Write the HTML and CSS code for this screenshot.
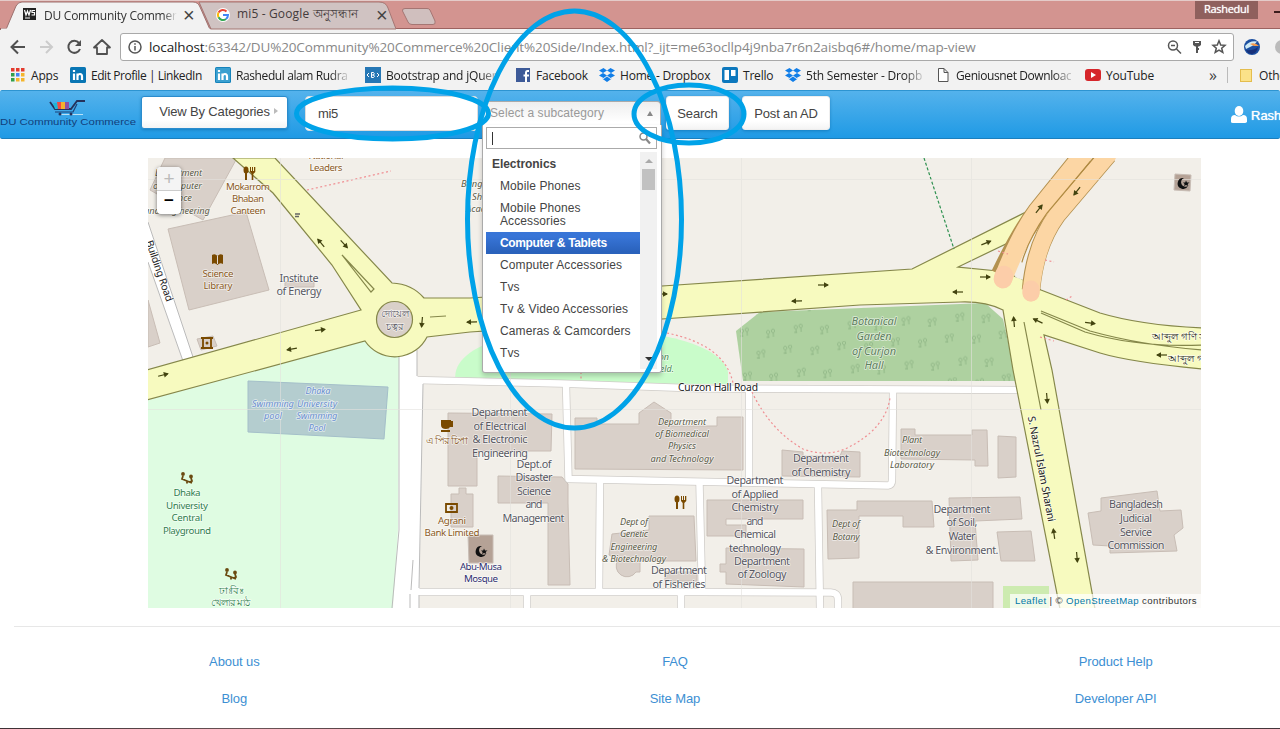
FILE: index.html
```
<!DOCTYPE html>
<html lang="en">
<head>
<meta charset="utf-8">
<title>DU Community Commerce</title>
<link rel="stylesheet" href="styles.css">
</head>
<body>
<div class="screen">
<header class="browser">
  <div class="tabs">
    <svg class="tab-shapes" width="460" height="29" viewBox="0 0 460 29">
      <path d="M199 1H379Q386 1 388 7L396 28H211Z" fill="#d0c3c2" stroke="#a57673"/>
      <path d="M0 28.500H6L16 5Q18 1 22 1H193Q198 1 200 6L210 28.500V30H0Z" fill="#f2f2f2"/>
      <path d="M0 28.500H6L16 5Q18 1 22 1H193Q198 1 200 6L210 28.500" fill="none" stroke="#9c706e"/>
      <path d="M1 28.500H210" stroke="#f2f2f2" stroke-width="2"/>
      <path d="M405 7.500H427Q429 7.500 430 9L435 20Q436 23.500 433 23.500H412Q409 23.500 408 21L402.500 10Q402 7.500 405 7.500Z" fill="#d0bfbe" stroke="#a57673"/>
    </svg>
    <div class="tab tab-active">
      <svg width="15" height="13" viewBox="0 0 15 13"><path d="M1 0H14V12H1Z" fill="#222"/><path d="M2.500 2L4 7L5.500 3L7 7L8.500 2M13 2.500H10V4.500H12.500V7H9.500M3 10H8" stroke="#fff" stroke-width="1.200" fill="none"/></svg>
      <span class="t1">DU Community Commer</span><b class="x">×</b>
    </div>
    <div class="tab">
      <svg width="14" height="14" viewBox="0 0 14 14"><circle cx="7" cy="7" r="7" fill="#fff"/><g fill="none" stroke-width="2"><path d="M2.500 4.500A5 5 0 0 1 10.500 3.500" stroke="#ea4335"/><path d="M2.500 9.300A5 5 0 0 1 2.500 4.500" stroke="#fbbc05"/><path d="M2.500 9.300A5 5 0 0 0 10 11" stroke="#34a853"/><path d="M7 7H12A5 5 0 0 1 10 11" stroke="#4285f4"/></g></svg>
      <span class="t2">mi5 - Google অনুসন্ধান</span><b class="x">×</b>
    </div>
    <span class="user">Rashedul</span><i class="min"></i>
  </div>
  <div class="toolbar">
    <svg class="navicons" width="120" height="36" viewBox="0 0 120 36" fill="none" stroke="#505050" stroke-width="2">
      <path d="M25 18H12M18 11.500L11.500 18L18 24.500"/>
      <path d="M40 18H52M46 12L52 18L46 24" stroke="#ccc"/>
      <path d="M79 14A6 6 0 1 0 80 20"/><path d="M81 11V17H75Z" fill="#505050" stroke="none"/>
      <path d="M94 18.500L102 11L110 18.500H107V25H97V18.500Z" stroke-width="1.800" stroke-linejoin="round"/>
    </svg>
    <div class="address">
      <svg width="14" height="14" viewBox="0 0 14 14" fill="none" stroke="#555" stroke-width="1.500"><circle cx="7" cy="7" r="6"/><path d="M7 6V10.500M7 3.200V4.800"/></svg>
      <span class="url"><em>localhost</em>:63342/DU%20Community%20Commerce%20Client%20Side/Index.html?_ijt=me63ocllp4j9nba7r6n2aisbq6#/home/map-view</span>
      <svg class="addr-icons" width="60" height="16" viewBox="0 0 60 16" fill="none" stroke="#555" stroke-width="1.500"><circle cx="6" cy="6.500" r="4.500"/><path d="M9.500 10L14 14.500M4 6.500H8"/><path d="M26 2H34V6L32 7.500H28L26 6Z" fill="#555" stroke="none"/><path d="M30 7V14M30 10H32" stroke-width="2"/><path d="M28 3.500H32" stroke="#fff" stroke-width="1"/><path d="M52 1.800L53.700 6L58 6.300L54.700 9.200L55.800 13.500L52 11.200L48.200 13.500L49.300 9.200L46 6.300L50.300 6Z"/></svg>
    </div>
    <svg class="ext" width="16" height="16" viewBox="0 0 16 16"><circle cx="8" cy="8" r="8" fill="#1c4fa0"/><path d="M1 7Q6 1 13 2.500L10 6Q6 8 2 10Z" fill="#cfeaf5"/><path d="M6 5Q11 3 15 7L10 7Z" fill="#f2984c"/><path d="M2 11Q9 12 14 8Q13 14 8 15Q4 15 2 11Z" fill="#16307a"/></svg>
    <i class="ext2"></i>
  </div>
  <nav class="bookmarks">
    <a><svg width="14" height="14" viewBox="0 0 14 14"><g fill="#e33b2e"><path d="M0 0h3.500v3.500H0zM5 0h3.500v3.500H5zM10 0h3.500v3.500H10z"/></g><path d="M0 5h3.500v3.500H0zM0 10h3.500v3.500H0z" fill="#31a04c"/><path d="M5 5h3.500v3.500H5z" fill="#4285f4"/><path d="M10 5h3.500v3.500H10zM5 10h3.500v3.500H5zM10 10h3.500v3.500H10z" fill="#f4b52c"/></svg><span class="b0">Apps</span></a>
    <a><svg width="16" height="16" viewBox="0 0 16 16"><rect width="16" height="16" rx="1.500" fill="#0976b4"/><path d="M4 6.500V13M4 3V5M7.500 13V6.500M7.500 9Q8 7 10 7T12 9.500V13" stroke="#fff" stroke-width="2.200" fill="none"/></svg><span class="b1">Edit Profile | LinkedIn</span></a>
    <a><svg width="16" height="16" viewBox="0 0 16 16"><rect width="16" height="16" rx="1.500" fill="#1583bb"/><rect x="1" y="1" width="14" height="14" fill="#3ba0d0"/><path d="M4 6.500V13M4 3V5M7.500 13V6.500M7.500 9Q8 7 10 7T12 9.500V13" stroke="#fff" stroke-width="2.200" fill="none"/></svg><span class="b2">Rashedul alam Rudra</span></a>
    <a><svg width="16" height="16" viewBox="0 0 16 16"><rect width="16" height="16" fill="#2577b5"/><path d="M4 6L2 8L4 10M12 6L14 8L12 10M6.500 5.500H8.500Q10 6.700 8.500 8Q10.500 9.300 8.500 10.500H6.500ZM7 8H9" stroke="#fff" fill="none"/></svg><span class="b3">Bootstrap and jQuer</span></a>
    <a><svg width="15" height="14" viewBox="0 0 15 14"><rect width="14" height="14" fill="#3d5a98"/><path d="M13 3H11.500Q10 3 10 5V14M7.500 7.500H13" stroke="#fff" stroke-width="2" fill="none"/></svg><span class="b4">Facebook</span></a>
    <a><svg width="16" height="16" viewBox="0 0 16 16" fill="#117ee8"><path id="db" d="M4.500 1L8 3.500L4 6L0 3.500ZM11.500 1L16 3.500L12 6L8 3.500ZM4 6L8 8.500L4.500 11L0 8.500ZM12 6L16 8.500L11.500 11L8 8.500ZM8 9.500L11.500 12L13 11.500L8 15L3 11.500L4.500 12Z"/></svg><span class="b5">Home - Dropbox</span></a>
    <a><svg width="16" height="16" viewBox="0 0 16 16"><rect width="16" height="16" rx="2" fill="#0d78bd"/><path d="M2.500 3H7V13H2.500ZM9 3H13.500V9H9Z" fill="#fff"/></svg><span class="b6">Trello</span></a>
    <a><svg width="16" height="16" viewBox="0 0 16 16" fill="#117ee8"><use href="#db"/></svg><span class="b7">5th Semester - Dropb</span></a>
    <a><svg width="13" height="14" viewBox="0 0 13 14" fill="#fff" stroke="#555"><path d="M.5.5H6L10 4.500V13.500H.5ZM6 .5V4.500H10"/></svg><span class="b8">Geniousnet Downloac</span></a>
    <a><svg width="16" height="12" viewBox="0 0 16 12"><rect width="16" height="12" rx="3" fill="#d6262b"/><path d="M6 3L11 6L6 9Z" fill="#fff"/></svg><span class="b9">YouTube</span></a>
    <span class="more">»</span>
    <a class="other"><i></i><span>Other bookmarks</span></a>
  </nav>
</header>

<div class="navbar">
  <svg class="logo" width="136" height="46" viewBox="0 0 136 46">
    <path d="M50 11L55 18H71L77 10H85" fill="none" stroke="#25325c" stroke-width="1.800"/><path d="M53 12H57L58 18H55Z" fill="#1fb6d8"/><path d="M57 11H61V18H58Z" fill="#ef4b45"/><path d="M61 11H65V18H61Z" fill="#f3b12d"/><path d="M65 11H69V18H65Z" fill="#8f4fa2"/><path d="M55 21H73L77 13M59 23.500H82" fill="none" stroke="#1d4379" stroke-width="1.200"/><path d="M61 23.500H83" stroke="#b8e1f7"/><circle cx="60" cy="23" r="1.500" fill="#25325c"/><circle cx="71" cy="23" r="1.500" fill="#25325c"/>
    <text x="0" y="34" textLength="136" lengthAdjust="spacingAndGlyphs">DU Community Commerce</text>
  </svg>
  <button class="btn categories">View By Categories<i></i></button>
  <input class="keyword" value="mi5">
  <div class="select">
    <div class="select-head">Select a subcategory<i></i></div>
    <div class="menu">
      <div class="filter"><i></i><svg width="12" height="13" viewBox="0 0 12 13" fill="none" stroke="#888"><circle cx="4.500" cy="4.500" r="3.500" stroke-width="1.500"/><path d="M7 7L11 11.500" stroke-width="2.200"/></svg></div>
      <div class="list">
        <ul>
          <li class="group">Electronics</li><li>Mobile Phones</li><li>Mobile Phones Accessories</li><li class="on">Computer &amp; Tablets</li><li>Computer Accessories</li><li>Tvs</li><li>Tv &amp; Video Accessories</li><li>Cameras &amp; Camcorders</li><li>Tvs</li>
        </ul>
        <div class="scroll"><i class="up"></i><i class="thumb"></i><i class="down"></i></div>
      </div>
    </div>
  </div>
  <button class="btn search">Search</button>
  <button class="btn post">Post an AD</button>
  <div class="account"><svg width="16" height="17" viewBox="0 0 16 17" fill="#fff"><ellipse cx="8" cy="5" rx="4.300" ry="5"/><path d="M0 16V13Q0 9 4 9Q8 12 12 9Q16 9 16 13V16Q15 17 14 17H2Q0 17 0 16Z"/></svg><span>Rashedul</span></div>
</div>

<main class="map">
<svg class="map-art" width="1053" height="450" viewBox="148 158 1053 450">
  <defs>
    <g id="ar"><path d="M-5 0H5" stroke="#42430f" stroke-width="1.200"/><path d="M1 -2.800L6 0L1 2.800Z" fill="#42430f"/></g>
    <pattern id="trees" width="54" height="44" patternUnits="userSpaceOnUse" x="755" y="311" patternTransform="rotate(-4)"><g fill="none" stroke="#92b888"><path id="tr" d="M4 5a1.500 2 0 1 1 .1 0V9M9 4a1.500 2 0 1 1 .1 0V8M2 8H5"/><use href="#tr" x="27" y="3"/><use href="#tr" x="12" y="24"/><use href="#tr" x="38" y="27"/></g></pattern>
    <g id="food" fill="#7a4a00"><ellipse cx="-3" cy="-3" rx="2.500" ry="3.500"/><path d="M-4 -1H-2V7H-4ZM1 -6H2V-2H3V-6H4V-2H5V-6H6.300V-1L4.300 1V7H2.700V1L1 -1Z"/></g>
    <g id="play" fill="none" stroke="#6a4a10" stroke-width="1.800"><path d="M-5 1L5 5M0 3V5.500M-4 -2L-5 1L-2 2M4 0L5 3L2 4"/><circle cx="-4" cy="-4" r="1"/><circle cx="4" cy="-1.500" r="1"/></g>
  </defs>
  <rect x="148" y="158" width="1053" height="450" fill="#f2efe9"/>
  <path d="M148 400L365 341L399 355V530L393 608H148Z" fill="#dffce2"/>
  <path d="M456 383C448 352 500 330 575 329S720 342 728 372V384Z" fill="#c9fcca"/>
  <path d="M760 312L985 303L1003 319L1017 381H743L736 331Z" fill="#aed1a0"/><path d="M760 312L985 303L1003 319L1017 381H743L736 331Z" fill="url(#trees)"/>
  <path d="M248 381L388 387L384 439L248 432Z" fill="#b4cdcf" stroke="#a4bfc9"/>
  <path d="M1003 608V586H1049V608Z" fill="#cdebb0"/>
  <g class="building">
    <path d="M165 158H237L203 220L150 190Z"/><path d="M168 229L246 212L269 290L189 310Z"/><path d="M148 300L160 343L148 347Z"/><path d="M285 282H314V287H285ZM197 339L213 336L217 346L201 350Z"/>
    <path d="M448 413L552 414L551 451H477V486H448Z"/><path d="M459 488H466V494H473V527H451V494H459Z"/><path d="M498 476L562 477L568 484V503L570 585H548V503H498Z"/>
    <path d="M575 418H597V424H639V413L654 402L671 413V426H717V417H743V470L575 469Z"/><path d="M649 516H694L696 561H640V572H636A10 10 0 1 1 618 560L609 555L612 534L649 530Z"/><path d="M665 572H697V581H665Z"/>
    <path d="M707 500H803V519H726V525H746V536H707Z"/><path d="M726 548L804 549V587L726 584V572H720V564H726Z"/><path d="M782 450L803 452V456H840L842 451L860 452V477L782 476Z"/>
    <path d="M901 429H915V435H972V430H987L988 466H975V460L901 459Z"/><path d="M998 436L1016 437V477L998 478Z"/><path d="M827 510H857V501H932L934 527H903V516H859V558L828 559Z"/><path d="M949 498L1020 497L1022 519L975 521L978 560L951 561Z"/><path d="M997 532L1031 531L1035 561H1001Z"/><path d="M1101 498L1157 491L1160 511L1181 510L1183 528L1174 535L1177 551L1110 553V546L1093 545L1088 513L1101 511Z"/><path d="M853 582H993V609H853Z"/>
    <path d="M468 535H493V563H469Z" fill="#b5a296"/><path d="M1175 174L1191 175L1190 191L1174 190Z" fill="#b5a296"/>
  </g>
  <g fill="none" stroke-linejoin="round">
    <g stroke="#cfccc8" stroke-width="8"><path d="M416 380L560 383.500L700 388.500L1022 390"/><path d="M566 385L568.500 479L888 485.500Q892 485 892 480L893 392"/><path d="M600 481L599 592M699.500 484L702 592M818 487L820 610M749 390V481"/><path d="M415 592H700L830 592.500Q838 592 838 600V610M527 592V610M681 592V610"/></g>
    <g stroke="#fff" stroke-width="6.500"><path d="M414 380L560 383.500L700 388.500L1022 390"/><path d="M566 385L568.500 479L888 485.500Q892 485 892 480L893 392"/><path d="M600 481L599 592M699.500 484L702 592M818 487L820 610M749 390V481"/><path d="M412 592H700L830 592.500Q838 592 838 600V610M527 592V610M681 592V610"/></g>
  </g>
  <path d="M399 350H417V376L423 381L419 608H393L398 530Z" fill="#fff"/><path d="M399 355V530L392 608M417 350V376M423 384L419 588M413 560L411 590M410 594V608M419 595V608" fill="none" stroke="#bbb"/>
  <path d="M148 222L193 357L183 361L148 262Z" fill="#fff"/><path d="M148 222L193 357M183 361L148 262" stroke="#bbb"/>
  <g fill="#f7fabf" stroke="#85874a" stroke-width="1.200">
    <path d="M233 158H275L392 283Q412 284 424 298L470 298L662 286L912 269L1030 210L1012 241L958 267L998 271L1020 278L1041 290L1100 313Q1140 325 1202 328V369Q1130 362 1100 353L1044 335L1052 370L1095 609H1060L1013 370L1003 310Q985 301 960 302L860 305L662 319L470 332L427 337A36 36 0 0 1 365 341L147 400V370L361 310L332 265L273 193Z"/>
    <circle cx="394.500" cy="319.500" r="18" fill="#d9d0c9"/><path d="M342 255L374 289L371 292Z"/><path d="M430 317L446 316" /><path d="M1041 311L1090 331Q1140 345 1202 350M1041 313L1085 332Q1140 348 1202 345M1024 322L1041 410" fill="none"/>
  </g>
  <path d="M1000 271L1010 246L1022 250L1015 277L1023 280L1026 262" fill="#f2efe9"/>
  <g fill="none"><path d="M1083 155L1037 212Q1020 235 1001 275" stroke="#b39150" stroke-width="20.500"/><path d="M1108 155L1057 215Q1035 245 1031 290" stroke="#b39150" stroke-width="18.500"/><g stroke-linecap="round"><path d="M1083 155L1037 212Q1020 235 1003 279" stroke="#fcd6a4" stroke-width="18.500"/><path d="M1108 155L1057 215Q1035 245 1031 293" stroke="#fcd6a4" stroke-width="17"/><path d="M1095 156L1047 213Q1029 238 1022 262" stroke="#b08a40" stroke-width="1.200"/><path d="M1003 279L1004 275" stroke="#fccda9" stroke-width="18.500"/><path d="M1031 293V289" stroke="#fccda9" stroke-width="17"/></g></g>
  <path d="M924 158L954 249" stroke="#2f9150" stroke-width="1.200" stroke-dasharray="3 2"/>
  <g fill="none" stroke="#f08f93" stroke-width="1.200" stroke-dasharray="2 2.500"><path d="M307 190L391 171M667 333Q725 345 733 383M752 392Q770 430 803 449Q825 457 845 449Q885 430 890 398M1040 337L1054 341M998 251L1008 254M1066 300L1072 296M1045 260L1054 262M581 372V380"/></g>
  <g stroke="#e4e2de" opacity=".6"><path d="M148 179.500H1201M148 409.500H1201M280.500 158V608M510.500 158V608M741.500 158V608M971.500 158V608"/></g>
  <g>
    <use href="#ar" transform="translate(320 330) rotate(-8)"/><use href="#ar" transform="translate(292 349) rotate(170)"/><use href="#ar" transform="translate(163 375) rotate(-15)"/><use href="#ar" transform="translate(321 243) rotate(-130)"/><use href="#ar" transform="translate(344 244) rotate(48)"/><use href="#ar" transform="translate(422 322) rotate(95)"/><use href="#ar" transform="translate(472 322) rotate(178)"/><use href="#ar" transform="translate(662 294)"/><use href="#ar" transform="translate(823 285)"/><use href="#ar" transform="translate(797 301) rotate(178)"/><use href="#ar" transform="translate(958 292) rotate(180)"/><use href="#ar" transform="translate(985 277)"/><use href="#ar" transform="translate(986 243) rotate(-22)"/><use href="#ar" transform="translate(1039 209) rotate(-52)"/><use href="#ar" transform="translate(1077 191) rotate(128)"/><use href="#ar" transform="translate(1014 322) rotate(-95)"/><use href="#ar" transform="translate(1038 321) rotate(-155)"/><use href="#ar" transform="translate(1090 323) rotate(8)"/><use href="#ar" transform="translate(1162 355) rotate(180)"/><use href="#ar" transform="translate(1047 398) rotate(85)"/><use href="#ar" transform="translate(1054 534) rotate(-98)"/><use href="#ar" transform="translate(1077 557) rotate(85)"/>
  </g>
  <path d="M295 214H300M295 216.500H299" stroke="#666" stroke-width="1.500"/>
  <use href="#food" x="249" y="173"/><use href="#food" x="680" y="502"/><use href="#play" x="187" y="478"/><use href="#play" x="231" y="574"/>
  <path d="M212 255Q215 253 217.500 256Q220 253 223 255V264Q220 262 217.500 265Q215 262 212 264ZM441 420H451V421H453V427H450Q449 429 446 429Q441 429 441 425ZM441 430H450V432H441Z" fill="#7a4a00"/><path d="M217.500 256V264" stroke="#e4dcd5"/>
  <path d="M446 504H457V512H446Z" fill="none" stroke="#7a4a00" stroke-width="1.800"/><circle cx="451.500" cy="508" r="2" fill="#7a4a00"/>
  <path d="M201 338H213M203 339V348H211V339M201 348H213" fill="none" stroke="#7a4a00" stroke-width="1.800"/><circle cx="207" cy="343" r="1.500" fill="#7a4a00"/>
  <path id="moon" d="M482 546A5.500 5.500 0 1 0 486 554A4.500 4.500 0 1 1 482 546ZM484 548.500L485 550.500H487.500L485.700 552L486.300 554L484 553L482 554L482.600 552L481 550.500H483.200Z" fill="#111"/><use href="#moon" x="702" y="-368"/>
  <g class="labels">
    <g class="it gray"><text x="202" y="176" class="end" textLength="47">Department</text><text x="202" y="189" class="end" textLength="49">of Computer</text><text x="192" y="201" class="end">Science</text><text x="210" y="214" class="end" textLength="66">and Engineering</text><text x="461" y="187" class="start">Bangladesh</text><text x="472" y="200" class="start">Shishu</text><text x="466" y="212" class="start">Academy</text></g>
    <g class="brown"><text x="326" y="159" textLength="35">National</text><text x="326" y="171" textLength="33">Leaders</text><text x="248" y="190" textLength="44">Mokarrom</text><text x="248" y="202" textLength="32">Bhaban</text><text x="248" y="214" textLength="35">Canteen</text><text x="218" y="277" textLength="31">Science</text><text x="218" y="289" textLength="29">Library</text><text x="447" y="444" textLength="42">এ পির চিপা</text><text x="452" y="524" textLength="28">Agrani</text><text x="452" y="536" textLength="55">Bank Limited</text></g>
    <g class="big"><text x="299" y="281.500" textLength="39">Institute</text><text x="299" y="295" textLength="45">of Energy</text><text x="394.500" y="317" class="small" textLength="28">দোয়েল</text><text x="394.500" y="330" class="small" textLength="18">চত্বর</text>
      <text x="499.500" y="416" textLength="56">Department</text><text x="500" y="430" textLength="53">of Electrical</text><text x="500" y="443" textLength="55">&amp; Electronic</text><text x="500" y="457" textLength="56">Engineering</text>
      <text x="534" y="467.500" textLength="35">Dept.of</text><text x="534" y="481" textLength="37">Disaster</text><text x="534" y="495" textLength="34">Science</text><text x="534" y="508" textLength="17">and</text><text x="533.500" y="522" textLength="62">Management</text>
      <text x="755" y="484" textLength="57">Department</text><text x="755" y="498" textLength="47">of Applied</text><text x="755" y="511" textLength="47">Chemistry</text><text x="755" y="525" textLength="17">and</text><text x="755" y="538" textLength="42">Chemical</text><text x="755" y="552" textLength="52">technology</text><text x="762" y="565" textLength="56">Department</text><text x="762" y="578" textLength="49">of Zoology</text>
      <text x="679" y="574" textLength="56">Department</text><text x="679" y="588" textLength="53">of Fisheries</text><text x="821" y="462" textLength="56">Department</text><text x="821" y="476" textLength="59">of Chemistry</text>
      <text x="962" y="513" textLength="57">Department</text><text x="962" y="526" textLength="31">of Soil,</text><text x="962" y="540" textLength="27">Water</text><text x="962" y="553.500" textLength="73">&amp; Environment.</text><text x="1136" y="508" textLength="54">Bangladesh</text><text x="1136" y="522" textLength="32">Judicial</text><text x="1136" y="535.500" textLength="32">Service</text><text x="1136" y="549" textLength="57">Commission</text></g>
    <g class="green"><text x="187" y="496" textLength="27">Dhaka</text><text x="187" y="509" textLength="42">University</text><text x="187" y="521" textLength="31">Central</text><text x="187" y="533.500" textLength="48">Playground</text><text x="230" y="594" textLength="25">ঢাঃ বিঃ</text><text x="230" y="606" textLength="39">খেলার মাঠ</text></g>
    <g class="it pool"><text x="318" y="394" textLength="25">Dhaka</text><text x="273" y="407" textLength="42">Swimming</text><text x="317" y="407" textLength="40">University</text><text x="273" y="419" textLength="18">pool</text><text x="317" y="419" textLength="41">Swimming</text><text x="317" y="431" textLength="17">Pool</text></g>
    <g class="it gray"><text x="682" y="425" textLength="48">Department</text><text x="682" y="437" textLength="54">of Biomedical</text><text x="682" y="449" textLength="28">Physics</text><text x="682" y="462" textLength="63">and Technology</text><text x="634" y="525" textLength="28">Dept of</text><text x="634" y="537" textLength="28">Genetic</text><text x="634" y="550" textLength="47">Engineering</text><text x="634" y="562" textLength="64">&amp; Biotechnology</text><text x="912" y="443" textLength="20">Plant</text><text x="912" y="456" textLength="56">Biotechnology</text><text x="912" y="468" textLength="44">Laboratory</text><text x="846" y="527" textLength="28">Dept of</text><text x="846" y="540" textLength="27">Botany</text></g>
    <g class="it garden"><text x="874" y="325" textLength="45">Botanical</text><text x="874" y="340" textLength="35">Garden</text><text x="874" y="355" textLength="44">of Curjon</text><text x="874" y="369" textLength="19">Hall</text></g>
    <g class="it green"><text x="669" y="360" class="end">Curzon</text><text x="674" y="372" class="end">Hall Field.</text></g>
    <g class="road"><text x="718" y="391" textLength="80">Curzon Hall Road</text><text transform="translate(1041 469) rotate(79)" y="3" textLength="107">S. Nazrul Islam Sharani</text><text transform="translate(159 271) rotate(71)" y="3" textLength="64">Building Road</text><text x="1152" y="340" class="start">আব্দুল গণি সড়ক</text><text x="1168" y="362" class="start">আব্দুল গণি সড়ক</text></g>
    <g class="mosque"><text x="481" y="570" textLength="42">Abu-Musa</text><text x="481" y="582" textLength="34">Mosque</text></g>
  </g>
</svg>
  <div class="zoom"><b class="off">+</b><b>−</b></div>
  <div class="credit"><a>Leaflet</a> | © <a>OpenStreetMap</a> contributors</div>
</main>

<footer class="footer"><a>About us</a><a>FAQ</a><a>Product Help</a><a>Blog</a><a>Site Map</a><a>Developer API</a></footer>
<div class="desktop-edge"></div>
<svg class="marks" width="1280" height="729" viewBox="0 0 1280 729" fill="none" stroke="#00a2e8" stroke-width="5"><ellipse cx="574.500" cy="219.500" rx="107" ry="208.500"/><ellipse cx="392.500" cy="113.500" rx="96" ry="25.500"/><ellipse cx="689" cy="114" rx="55" ry="29"/></svg>
</div>
</body>
</html>
```
FILE: styles.css
```
* { box-sizing: border-box; }
body { margin: 0; background: #fff; overflow: hidden; font-family: "Liberation Sans", Arial, sans-serif; }
.screen { position: relative; width: 1280px; height: 729px; overflow: hidden; display: flex; flex-direction: column; }
.browser { height: 90px; background: #f2f2f2; font: 12px "Open Sans", "Noto Sans", sans-serif; color: #222; flex: none; }
.tabs { position: relative; height: 29px; background: #d39490; border-top: 1px solid #e4cbc9; border-bottom: 1px solid #9c6260; display: flex; padding-left: 22px; }
.tab-shapes { position: absolute; left: 0; top: 0; }
.tab { position: relative; display: flex; align-items: center; height: 27px; width: 194px; flex: none; color: #443b3b; white-space: nowrap; }
.tab-active { color: #333; }
.tab svg { flex: none; margin-right: 7px; }
.tab .x { font: 20px/20px "Liberation Sans", sans-serif; color: #444; position: absolute; left: 161px; top: 4px; }
.tab + .tab .x { left: 160px; }
.t1 { width: 133px; overflow: hidden; letter-spacing: -.25px; padding-top: 1px; -webkit-mask-image: linear-gradient(90deg, #000 90%, transparent); }
.t2 { letter-spacing: .15px; padding-top: 1px; }
.user { margin-left: 785px; width: 63px; height: 18px; background: #8f605d; color: #fff; font: 11px/16px "Open Sans", sans-serif; text-align: center; text-shadow: 0 0 1px #fff; flex: none; letter-spacing: -.3px; }
.min { width: 10px; height: 2px; background: #3a1c1c; margin: 10px 0 0 16px; flex: none; }
.toolbar { height: 36px; display: flex; align-items: center; }
.navicons { flex: none; }
.address { width: 1114px; height: 28px; border: 1px solid #a9a9a9; border-radius: 3px; background: #fff; display: flex; align-items: center; padding: 0 6px 0 7px; flex: none; }
.url { font-size: 13.5px; color: #888; margin-left: 7px; letter-spacing: -.12px; white-space: nowrap; }
.url em { color: #222; font-style: normal; }
.addr-icons { margin-left: auto; }
.ext { margin-left: 10px; flex: none; }
.ext2 { width: 16px; height: 14px; border-radius: 8px; background: #bbb; margin-left: 15px; flex: none; }
.bookmarks { height: 20px; padding-left: 11px; display: grid; grid-template-columns: 59px 145px 150px 151px 83px 123px 63px 153px 147px 124px 18px 80px; align-items: center; }
.bookmarks a { display: flex; align-items: center; gap: 5px; white-space: nowrap; }
.bookmarks a svg { flex: none; }
.bookmarks a > span { letter-spacing: -.2px; }
.bookmarks .b0 { margin-left: 1px; }
.bookmarks .b1 { letter-spacing: -.45px; }
.bookmarks .b2, .bookmarks .b8 { letter-spacing: -.4px; }
.bookmarks .b2, .bookmarks .b3, .bookmarks .b7, .bookmarks .b8 { -webkit-mask-image: linear-gradient(90deg, #000 85%, #0003); }
.more { font-size: 16px; line-height: 16px; color: #444; }
.other { border-left: 1px solid #bbb; padding-left: 12px; height: 16px; }
.other i { width: 12px; height: 13px; background: #fbe289; border: 1px solid #e4bd4e; margin-right: 2px; flex: none; }
.navbar { height: 49px; background: linear-gradient(#54b2ec, #1f9ae5); border-top: 1px solid #2d94d1; border-bottom: 1px solid #1c7fbd; border-radius: 2px; display: flex; flex: none; font-size: 13px; color: #444; }
.logo { flex: none; }
.logo text { font: 9.5px "Liberation Sans", sans-serif; fill: #123f7b; }
.btn { border: 1px solid #eee; border-radius: 3px; background: linear-gradient(#fff 75%, #f4f4f4); padding: 0; font: 13px "Liberation Sans", sans-serif; color: #444; letter-spacing: -.15px; box-shadow: 0 1px 3px #0864a088; height: 33px; margin-top: 5px; flex: none; white-space: nowrap; }
.categories { width: 147px; margin-left: 5px; display: flex; align-items: center; justify-content: center; padding-left: 8px; border-color: #2b8ccd; padding-bottom: 3px; }
.categories i { border: 3.5px solid transparent; border-left: 4px solid #bbb; border-right: 0; margin-left: 4px; }
.keyword { width: 173px; height: 35px; margin: 5px 0 0 17px; border: 1px solid #ddd; border-radius: 4px; background: #fff; padding: 0 12px 1px; font: 13px "Liberation Sans", sans-serif; color: #444; letter-spacing: -.3px; flex: none; }
.select { position: relative; width: 179px; height: 27px; margin: 10px 0 0 4px; flex: none; z-index: 2; font-size: 12px; letter-spacing: .1px; }
.select-head { height: 26px; background: linear-gradient(#eee, #fff 80%); border: 1px solid #aaa; border-bottom: 0; border-radius: 4px 4px 0 0; color: #999; padding: 0 7px; line-height: 21px; display: flex; justify-content: space-between; align-items: center; padding-bottom: 2px; }
.select-head i { border: 3.5px solid transparent; border-bottom: 5px solid #888; border-top: 0; }
.menu { position: absolute; left: 0; top: 24px; width: 180px; height: 248px; background: #fff; border: 1px solid #aaa; border-top: 0; border-radius: 0 0 3px 3px; box-shadow: 0 3px 5px #0003; padding: 2px 4px 0 3px; }
.filter { height: 22px; border: 1px solid #aaa; display: flex; justify-content: space-between; align-items: center; padding: 0 5px; }
.filter i { width: 1px; height: 13px; background: #333; }
.list { display: flex; height: 217px; margin-top: 3px; overflow: hidden; }
.list ul { list-style: none; margin: 1px 0 0; padding: 0; width: 154px; color: #444; }
.list li { padding: 5px 6px 4px 14px; line-height: 13px; }
.list .group { padding-left: 6px; font-weight: bold; letter-spacing: -.05px; }
.list .on { color: #fff; background: linear-gradient(#3875d7 20%, #2a62bc 90%); font-weight: bold; letter-spacing: -.35px; }
.scroll { width: 17px; margin-left: auto; background: #f1f1f1; display: flex; flex-direction: column; align-items: center; }
.up { border: 4px solid transparent; border-top: 0; border-bottom: 4px solid #aaa; margin-top: 7px; }
.thumb { width: 13px; height: 21px; background: #c1c1c1; margin-top: 6px; }
.down { border: 4px solid transparent; border-bottom: 0; border-top: 4px solid #333; margin: auto 0 8px; }
.search { width: 63px; margin-left: 5px; height: 34px; }
.post { width: 88px; margin-left: 13px; height: 34px; }
.account { margin-left: 401px; display: flex; align-items: center; gap: 4px; color: #fff; height: 49px; font-size: 13px; text-shadow: 0 0 1px #fff; }
.account svg { flex: none; margin-top: -3px; }
.map { position: relative; width: 1053px; height: 450px; margin: 19px 0 0 148px; flex: none; }
.map-art { display: block; }
.building { fill: #d9d0c9; stroke: #c8bdb5; stroke-width: 1; }
.labels { text-anchor: middle; font: 10px "Noto Sans", sans-serif; fill: #444; }
.labels text { paint-order: stroke; stroke: #ffffff99; stroke-width: 1.6px; stroke-linejoin: round; }
.labels .start { text-anchor: start; }
.labels .end { text-anchor: end; }
.it { font-style: italic; font-size: 9.3px; }
.gray { fill: #5c5c48; }
.brown { fill: #8b5a1e; font-size: 9.8px; }
.big { fill: #585862; font-size: 10.8px; }
.small { font-size: 10px; }
.green { fill: #2f7d4d; font-size: 9.8px; }
.it.green { fill: #4b8b56; font-size: 9px; }
.pool { fill: #6a8fd0; }
.garden { fill: #5f7f60; font-size: 11px; }
.road { fill: #222; font-size: 10.3px; }
.mosque { fill: #2e2e70; font-size: 9.8px; }
.zoom { position: absolute; left: 9px; top: 9px; width: 24px; height: 47px; background: #fff; border-radius: 4px; box-shadow: 0 1px 4px #0008; overflow: hidden; }
.zoom b { display: block; height: 24px; font: bold 17px/20px "Liberation Sans", sans-serif; text-align: center; }
.zoom .off { color: #bbb; background: #f4f4f4; border-bottom: 1px solid #ccc; font-weight: normal; font-size: 19px; line-height: 24px; }
.credit { position: absolute; right: 0; bottom: 0; height: 14px; width: 191px; background: #ffffffb8; color: #333; font: 9.6px/14px "Liberation Sans", sans-serif; letter-spacing: .4px; text-align: right; padding-right: 4px; white-space: nowrap; }
.credit a { color: #0078a8; }
.footer { width: 1322px; height: 102px; margin: 18px 0 0 14px; border-top: 1px solid #e7e7e7; padding-top: 16px; display: grid; grid-template-columns: repeat(3, 1fr); grid-auto-rows: 37px; text-align: center; font-size: 13px; letter-spacing: -.1px; line-height: 37px; color: #3d8fd3; flex: none; }
.desktop-edge { height: 1px; background: linear-gradient(90deg, #3c3034, #6b5457 20%, #3b2d31 40%, #67585a 70%, #42353a); flex: none; }
.marks { position: absolute; left: 0; top: 0; z-index: 5; pointer-events: none; }
```
